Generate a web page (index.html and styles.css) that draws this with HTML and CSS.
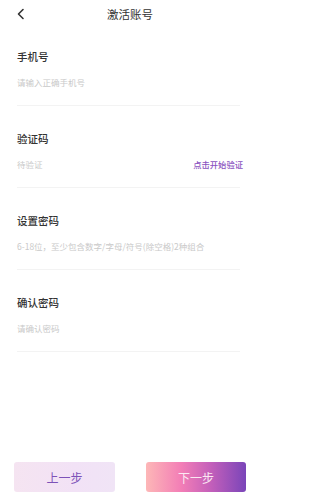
FILE: index.html
```html
<!DOCTYPE html>
<html lang="zh">
<head>
<meta charset="utf-8">
<link rel="stylesheet" href="styles.css">
</head>
<body>
<div class="page">
  <header class="topbar">
    <span class="back">
      <svg width="10" height="14" viewBox="0 0 10 14"><polyline points="7,2.5 2.5,7 7,11.5" fill="none" stroke="#333" stroke-width="1.6" stroke-linecap="round" stroke-linejoin="round"/></svg>
    </span>
    <span class="title">激活账号</span>
  </header>
  <main class="form">
    <div class="field first">
      <div class="label">手机号</div>
      <div class="row"><span class="ph">请输入正确手机号</span></div>
    </div>
    <div class="field">
      <div class="label">验证码</div>
      <div class="row"><span class="ph">待验证</span><span class="link">点击开始验证</span></div>
    </div>
    <div class="field">
      <div class="label">设置密码</div>
      <div class="row"><span class="ph">6-18位，至少包含数字/字母/符号(除空格)2种组合</span></div>
    </div>
    <div class="field">
      <div class="label">确认密码</div>
      <div class="row"><span class="ph">请确认密码</span></div>
    </div>
  </main>
  <footer class="actions">
    <button class="btn prev">上一步</button>
    <button class="btn next">下一步</button>
  </footer>
</div>
</body>
</html>
```
FILE: styles.css
```css
html, body {
  margin: 0;
  padding: 0;
  background: #fff;
}
body {
  font-family: "Noto Sans CJK SC", "Noto Sans", sans-serif;
  color: #333;
}
.page {
  width: 260px;
  min-height: 500px;
  display: flex;
  flex-direction: column;
}
.topbar {
  position: relative;
  height: 28px;
  display: flex;
  align-items: center;
  justify-content: center;
}
.back {
  position: absolute;
  left: 16px;
  top: 7px;
  width: 10px;
  height: 14px;
  display: flex;
}
.title {
  font-size: 11.5px;
  line-height: 14px;
  color: #333;
}
.form {
  padding: 0 20px 0 17px;
}
.field {
  padding-top: 26px;
}
.field.first {
  padding-top: 22px;
}
.label {
  font-size: 10.5px;
  line-height: 14px;
  height: 14px;
  font-weight: 500;
  color: #333;
}
.row {
  margin-top: 11px;
  height: 14px;
  padding-bottom: 16px;
  border-bottom: 1px solid #f3f3f3;
  display: flex;
  align-items: center;
  justify-content: space-between;
}
.ph {
  font-size: 8.5px;
  line-height: 14px;
  color: #c9c9c9;
  white-space: nowrap;
}
.link {
  font-size: 8.3px;
  line-height: 14px;
  color: #8a52c0;
  font-weight: 500;
  margin-right: -3px;
}
.actions {
  margin-top: auto;
  display: flex;
  justify-content: space-between;
  padding: 0 14px 8px 14px;
}
.btn {
  border: none;
  width: 101px;
  height: 30px;
  border-radius: 3px;
  font-family: "Noto Sans CJK SC", sans-serif;
  font-size: 12px;
  padding: 0;
}
.prev {
  background: linear-gradient(90deg, #f5e4f1 0%, #f2e2f6 60%, #f0e4f6 100%);
  color: #7d52b8;
}
.next {
  width: 100px;
  background: linear-gradient(90deg, #fdb7b7 0%, #f37eb6 35%, #c35fba 65%, #7a45b9 100%);
  color: #fbe8f2;
}
```
